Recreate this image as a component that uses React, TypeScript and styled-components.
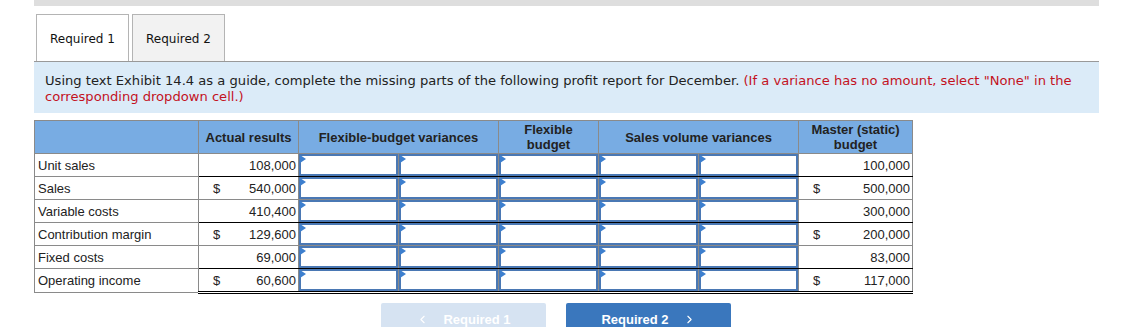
import styled, { createGlobalStyle } from "styled-components";
import { ChevronLeft, ChevronRight } from "lucide-react";

const GlobalStyle = createGlobalStyle`
  body {
    margin: 0;
    background: #fff;
    font-family: "Liberation Sans", Arial, sans-serif;
    color: #222;
  }
`;

type Row = {
  label: string;
  actual: string;
  master: string;
  dollar?: boolean;
  line?: "single" | "double";
};

const rows: Row[] = [
  { label: "Unit sales", actual: "108,000", master: "100,000", line: "single" },
  { label: "Sales", actual: "540,000", master: "500,000", dollar: true },
  { label: "Variable costs", actual: "410,400", master: "300,000", line: "single" },
  { label: "Contribution margin", actual: "129,600", master: "200,000", dollar: true },
  { label: "Fixed costs", actual: "69,000", master: "83,000", line: "single" },
  { label: "Operating income", actual: "60,600", master: "117,000", dollar: true, line: "double" },
];

const App = () => {
  return (
    <>
      <GlobalStyle />
      <Page>
        <TopBar />
        <Tabs>
          <Tab $active>Required 1</Tab>
          <Tab>Required 2</Tab>
        </Tabs>
        <Instructions>
          <Line>
            Using text Exhibit 14.4 as a guide, complete the missing parts of the following profit report for
            December. <Red>(If a variance has no amount, select "None" in the</Red>
          </Line>
          <Line>
            <Red>corresponding dropdown cell.)</Red>
          </Line>
        </Instructions>
        <Report>
          <colgroup>
            <col style={{ width: 164 }} />
            <col style={{ width: 100 }} />
            <col style={{ width: 100 }} />
            <col style={{ width: 100 }} />
            <col style={{ width: 100 }} />
            <col style={{ width: 100 }} />
            <col style={{ width: 100 }} />
            <col style={{ width: 114 }} />
          </colgroup>
          <thead>
            <tr>
              <Th />
              <Th>Actual results</Th>
              <Th colSpan={2}>Flexible-budget variances</Th>
              <Th>
                Flexible
                <br />
                budget
              </Th>
              <Th colSpan={2}>Sales volume variances</Th>
              <Th>
                Master (static)
                <br />
                budget
              </Th>
            </tr>
          </thead>
          <tbody>
            {rows.map((r) => (
              <tr key={r.label}>
                <LabelCell>{r.label}</LabelCell>
                <NumCell $line={r.line}>
                  <Amount>
                    <span>{r.dollar ? "$" : ""}</span>
                    <span>{r.actual}</span>
                  </Amount>
                </NumCell>
                {[0, 1, 2, 3, 4].map((i) => (
                  <InputCell key={i} $line={r.line}>
                    <Dropdown>
                      <Marker />
                    </Dropdown>
                  </InputCell>
                ))}
                <NumCell $line={r.line}>
                  <Amount>
                    <span>{r.dollar ? "$" : ""}</span>
                    <span>{r.master}</span>
                  </Amount>
                </NumCell>
              </tr>
            ))}
          </tbody>
        </Report>
        <Nav>
          <NavButton $disabled>
            <ChevronLeft size={13} strokeWidth={2} />
            Required 1
          </NavButton>
          <NavButton>
            Required 2
            <ChevronRight size={13} strokeWidth={2} />
          </NavButton>
        </Nav>
      </Page>
    </>
  );
};

export default App;

const Page = styled.div`
  width: 1065px;
  margin-left: 34px;
`;

const TopBar = styled.div`
  height: 6px;
  background: #dedede;
`;

const Tabs = styled.div`
  display: flex;
  gap: 3px;
  margin-top: 8px;
  padding-left: 2px;
`;

const Tab = styled.div<{ $active?: boolean }>`
  width: 93px;
  height: 47px;
  box-sizing: border-box;
  display: flex;
  align-items: center;
  justify-content: center;
  padding-top: 2px;
  border: 1px solid #b4b4b4;
  border-bottom: none;
  background: ${(p) => (p.$active ? "#fff" : "#f2f2f2")};
  font-family: "DejaVu Sans", Verdana, sans-serif;
  font-size: 12px;
  color: #111;
`;

const Instructions = styled.div`
  height: 52px;
  box-sizing: border-box;
  border-top: 1px solid #999;
  background: #dbebf8;
  padding: 11px 11px 0;
  font-family: "DejaVu Sans", Verdana, sans-serif;
  font-size: 13.1px;
  line-height: 16px;
  color: #222;
`;

const Line = styled.div`
  white-space: nowrap;
`;

const Red = styled.span`
  color: #c3121e;
`;

const Report = styled.table`
  margin-top: 7px;
  width: 878px;
  table-layout: fixed;
  border-collapse: collapse;
  font-size: 13px;
`;

const Th = styled.th`
  height: 32px;
  padding: 0 2px;
  background: #78ace3;
  border: 1px solid #8a8a8a;
  font-weight: bold;
  font-size: 13px;
  line-height: 15px;
  color: #222;
  text-align: center;
`;

const LabelCell = styled.td`
  height: 22px;
  padding: 0 3px;
  border: 1px solid #8a8a8a;
  white-space: nowrap;
`;

const lineStyle = (l?: "single" | "double") =>
  l === "double" ? "3px double #000" : l === "single" ? "1px solid #000" : "1px solid #8a8a8a";

const NumCell = styled.td<{ $line?: "single" | "double" }>`
  height: 22px;
  padding: 0 2px 0 14px;
  border: 1px solid #8a8a8a;
  border-bottom: ${(p) => lineStyle(p.$line)};
`;

const Amount = styled.div`
  display: flex;
  justify-content: space-between;
`;

const InputCell = styled.td<{ $line?: "single" | "double" }>`
  height: 22px;
  padding: 0;
  border: 1px solid #8a8a8a;
  border-bottom: ${(p) => lineStyle(p.$line)};
`;

const Dropdown = styled.div`
  position: relative;
  height: 22px;
  box-sizing: border-box;
  border: 2px solid #4a78b4;
  background: #fff;
`;

const Marker = styled.span`
  position: absolute;
  left: -1px;
  top: -1px;
  width: 0;
  height: 0;
  border-top: 4px solid transparent;
  border-bottom: 4px solid transparent;
  border-left: 6px solid #3d7fce;
`;

const Nav = styled.div`
  display: flex;
  gap: 20px;
  margin-top: 9px;
  padding-left: 347px;
`;

const NavButton = styled.div<{ $disabled?: boolean }>`
  width: 165px;
  height: 32px;
  box-sizing: border-box;
  border-radius: 2px;
  display: flex;
  align-items: center;
  justify-content: center;
  gap: 14px;
  background: ${(p) => (p.$disabled ? "#d6e3f2" : "#3a77bd")};
  color: #fff;
  font-weight: bold;
  font-size: 13px;
`;
